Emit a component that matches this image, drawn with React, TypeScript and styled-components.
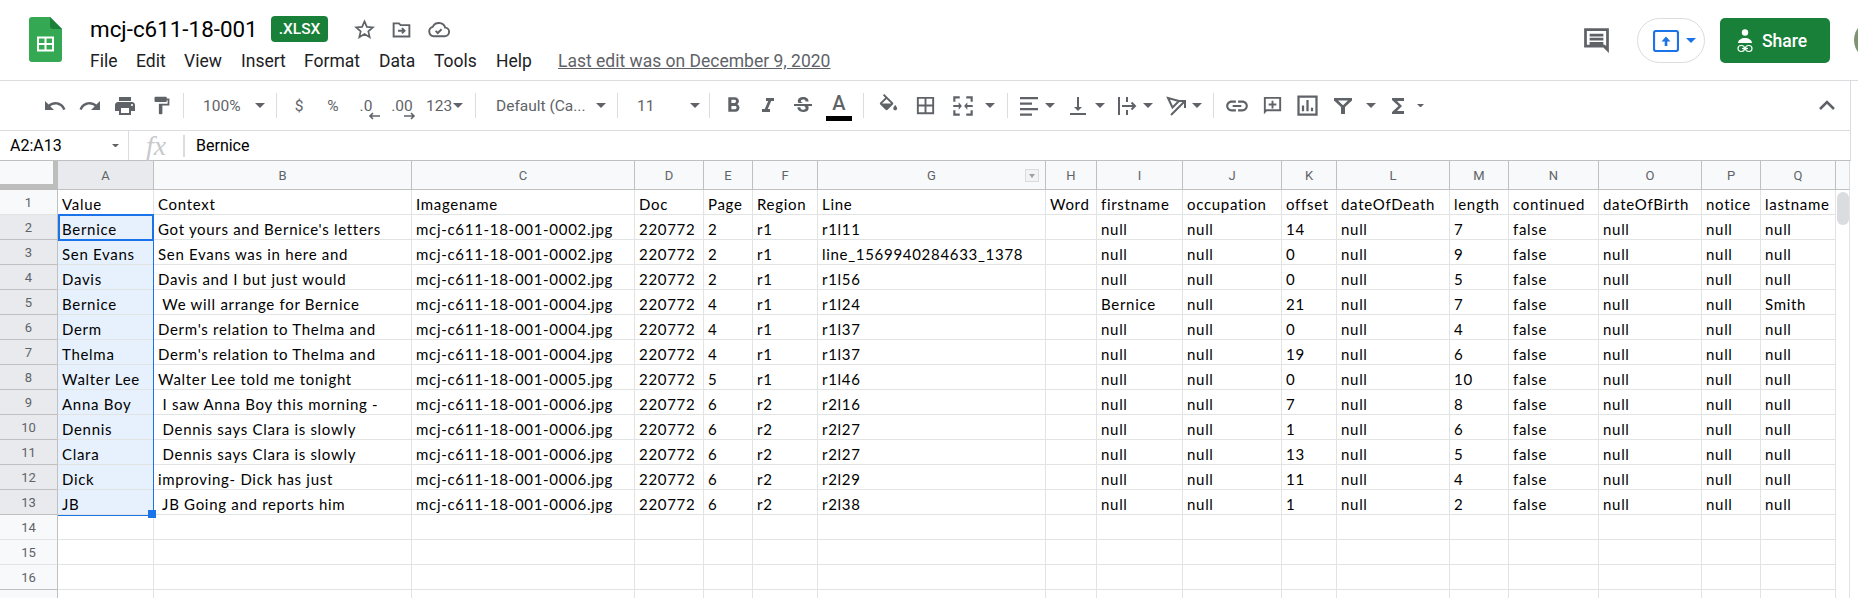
import React from 'react';
import styled, { createGlobalStyle } from 'styled-components';

const GlobalStyle = createGlobalStyle`
	html, body {
		margin: 0;
		padding: 0;
		background: #fff;
		overflow: hidden;
	}
	body {
		font-family: Roboto, "Liberation Sans", sans-serif;
		color: #202124;
	}
`;

const Page = styled.div`
	width: 1858px;
	height: 598px;
	overflow: hidden;
	display: flex;
	flex-direction: column;
`;

/* ---------- title bar ---------- */

const TitleBar = styled.header`
	height: 81px;
	flex: none;
	display: flex;
	box-sizing: border-box;
	border-bottom: 1px solid #dadce0;
`;

const LogoBox = styled.div`
	width: 90px;
	flex: none;
	padding: 17px 0 0 29px;
	box-sizing: border-box;
`;

const TitleBlock = styled.div`
	flex: 1;
	min-width: 0;
	display: flex;
	flex-direction: column;
`;

const TitleRow = styled.div`
	height: 26px;
	margin-top: 16px;
	display: flex;
	align-items: center;
`;

const DocName = styled.span`
	font-size: 22.4px;
	color: #000;
	width: 181px;
	flex: none;
`;

const Badge = styled.span`
	width: 57px;
	height: 26px;
	background: #188038;
	color: #fff;
	border-radius: 4px;
	font-size: 15.5px;
	font-weight: 500;
	display: flex;
	align-items: center;
	justify-content: center;
	margin-right: 18px;
`;

const TitleIcon = styled.span`
	width: 37px;
	display: flex;
	justify-content: center;
	color: #5f6368;
`;

const MenuRow = styled.nav`
	display: flex;
	align-items: center;
	margin-top: 9px;
	height: 20px;
	font-size: 17.5px;
	color: #202124;
	white-space: nowrap;
`;

const MenuItem = styled.span<{ $w: number }>`
	width: ${(p) => p.$w}px;
`;

const LastEdit = styled.span`
	color: #5f6368;
	text-decoration: underline;
`;

const HeaderRight = styled.div`
	display: flex;
	align-items: flex-start;
	padding-top: 18px;
	flex: none;
`;

const CommentBtn = styled.span`
	width: 41px;
	height: 45px;
	display: flex;
	align-items: center;
	justify-content: center;
	margin-right: 20px;
	color: #5f6368;
`;

const PresentPill = styled.span`
	width: 68px;
	height: 45px;
	box-sizing: border-box;
	border: 1px solid #dadce0;
	border-radius: 23px;
	display: flex;
	align-items: center;
	padding-left: 15px;
	gap: 7px;
	margin-right: 15px;
`;

const ShareBtn = styled.span`
	width: 110px;
	height: 45px;
	box-sizing: border-box;
	background: #188038;
	border-radius: 5px;
	color: #fff;
	font-size: 17.5px;
	font-weight: 500;
	display: flex;
	align-items: center;
	padding-left: 17px;
	gap: 9px;
`;

const Avatar = styled.span`
	width: 40px;
	height: 40px;
	margin: 2px -36px 0 24px;
	flex: none;
	border-radius: 50%;
	background: #7d9472;
`;

/* ---------- toolbar ---------- */

const ToolBar = styled.div`
	height: 50px;
	width: 1851px;
	flex: none;
	display: flex;
	align-items: center;
	box-sizing: border-box;
	border-bottom: 1px solid #dadce0;
	border-right: 1px solid #dadce0;
	padding-left: 37px;
	color: #5f6368;
`;

const Tool = styled.span<{ $w: number; $ml?: number }>`
	width: ${(p) => p.$w}px;
	margin-left: ${(p) => p.$ml ?? 0}px;
	height: 28px;
	flex: none;
	display: flex;
	align-items: center;
	justify-content: center;
	font-size: 15.5px;
	color: #5f6368;
	white-space: nowrap;
`;

const ToolLabel = styled.span<{ $w: number; $ml?: number }>`
	width: ${(p) => p.$w}px;
	margin-left: ${(p) => p.$ml ?? 0}px;
	height: 28px;
	flex: none;
	display: flex;
	align-items: center;
	font-size: 15.5px;
	color: #5f6368;
	white-space: nowrap;
`;

const Sep = styled.span<{ $ml?: number }>`
	width: 1px;
	height: 25px;
	flex: none;
	margin-left: ${(p) => p.$ml ?? 0}px;
	background: #dadce0;
`;

const Collapse = styled.span`
	margin-left: auto;
	margin-right: 11px;
	display: flex;
	color: #5f6368;
`;

const ColorBar = styled.span`
	position: absolute;
	left: 0;
	bottom: 0;
	width: 26px;
	height: 5px;
	background: #000;
`;

const TextColor = styled(Tool)`
	position: relative;
	height: 30px;
	font-size: 20px;
	font-weight: 500;
	align-items: flex-start;
	line-height: 24px;
`;

const DecimalTool = styled.span`
	position: relative;
	display: flex;
	justify-content: center;
	width: 100%;
	height: 28px;
	align-items: center;
`;

const ArrowMark = styled.svg`
	position: absolute;
	bottom: 0;
	margin-left: 16px;
`;

const CaretSvg = styled.svg`
	flex: none;
`;

/* ---------- formula bar ---------- */

const FormulaBar = styled.div`
	height: 30px;
	width: 1851px;
	flex: none;
	display: flex;
	align-items: center;
	box-sizing: border-box;
	border-bottom: 1px solid #c0c0c0;
	border-right: 1px solid #dadce0;
	font-size: 16px;
`;

const NameBox = styled.div`
	width: 129px;
	flex: none;
	height: 29px;
	box-sizing: border-box;
	border-right: 1px solid #dadce0;
	padding: 0 9px 0 10px;
	display: flex;
	align-items: center;
	justify-content: space-between;
	color: #000;
`;

const FxBox = styled.div`
	width: 54px;
	flex: none;
	display: flex;
	justify-content: center;
	font-family: "Liberation Serif", serif;
	font-style: italic;
	font-size: 28px;
	color: #c7c9cc;
	line-height: 29px;
`;

const FormulaSep = styled.span`
	width: 2px;
	height: 22px;
	background: #dadce0;
	flex: none;
`;

const FormulaValue = styled.span`
	margin-left: 11px;
	color: #000;
`;

/* ---------- grid ---------- */

const GridWrap = styled.div`
	flex: 1;
	position: relative;
	overflow: hidden;
`;

const Sheet = styled.div<{ $cols: string }>`
	display: grid;
	grid-template-columns: ${(p) => p.$cols};
	grid-template-rows: 29px repeat(17, 25px);
	width: 1850px;
`;

const Corner = styled.div`
	background: #f8f9fa;
	box-sizing: border-box;
	border-right: 5px solid #bdbdbd;
	border-bottom: 6px solid #bdbdbd;
`;

const ColHead = styled.div<{ $active?: boolean }>`
	background: ${(p) => (p.$active ? '#e8eaed' : '#f8f9fa')};
	box-sizing: border-box;
	border-right: 1px solid #c0c0c0;
	border-bottom: 1px solid #c0c0c0;
	display: flex;
	align-items: center;
	justify-content: center;
	font-size: 13px;
	color: #5f6368;
	position: relative;
`;

const FilterChip = styled.span`
	position: absolute;
	right: 6px;
	top: 8px;
	width: 14px;
	height: 13px;
	box-sizing: border-box;
	border: 1px solid #dadce0;
	background: #f1f3f4;
	display: flex;
	align-items: center;
	justify-content: center;
	&::after {
		content: '';
		border-left: 3px solid transparent;
		border-right: 3px solid transparent;
		border-top: 4px solid #9aa0a6;
	}
`;

const ScrollHead = styled.div`
	background: #f8f9fa;
	box-sizing: border-box;
	border-bottom: 1px solid #c0c0c0;
	border-right: 1px solid #dadce0;
`;

const RowHead = styled.div<{ $active?: boolean; $dark?: boolean }>`
	background: ${(p) => (p.$active ? '#e8eaed' : '#f8f9fa')};
	box-sizing: border-box;
	border-right: 1px solid #c0c0c0;
	border-bottom: 1px solid ${(p) => (p.$active || p.$dark ? '#c0c0c0' : '#e2e3e3')};
	display: flex;
	align-items: center;
	justify-content: center;
	font-size: 13px;
	color: #5f6368;
`;

const Cell = styled.div<{ $selected?: boolean }>`
	background: ${(p) => (p.$selected ? '#e7f0fd' : '#fff')};
	box-sizing: border-box;
	border-right: 1px solid #e2e3e3;
	border-bottom: 1px solid #e2e3e3;
	font-family: Lato, "Open Sans", sans-serif;
	font-size: 15px;
	letter-spacing: 0.7px;
	color: #000;
	padding: 4px 0 0 4px;
	display: flex;
	align-items: center;
	white-space: pre;
	overflow: hidden;
`;

const ScrollCell = styled.div`
	border-right: 1px solid #e2e3e3;
	box-sizing: border-box;
	background: #fff;
`;

const RangeOutline = styled.div`
	position: absolute;
	left: 58px;
	top: 53px;
	width: 96px;
	height: 302px;
	box-sizing: border-box;
	border-right: 1px solid #1a73e8;
	border-bottom: 1px solid #1a73e8;
	pointer-events: none;
`;

const ActiveOutline = styled.div`
	position: absolute;
	left: 58px;
	top: 53px;
	width: 96px;
	height: 27px;
	box-sizing: border-box;
	border: 2px solid #1a73e8;
	pointer-events: none;
`;

const FillHandle = styled.div`
	position: absolute;
	left: 148px;
	top: 349px;
	width: 8px;
	height: 8px;
	background: #1a73e8;
`;

const ScrollThumb = styled.div`
	position: absolute;
	left: 1837px;
	top: 31px;
	width: 12px;
	height: 33px;
	border-radius: 6px;
	background: #dadce0;
`;

/* ---------- icons ---------- */

const Caret: React.FC<{ color?: string; size?: number }> = ({ color = '#5f6368', size = 10 }) => (
	<CaretSvg width={size} height={size / 2} viewBox="0 0 10 5">
		<path d="M0 0h10L5 5z" fill={color} />
	</CaretSvg>
);

const Ico: React.FC<{ s?: number; d: string; stroke?: boolean; sw?: number }> = ({ s = 24, d, stroke, sw = 2 }) => (
	<svg
		width={s}
		height={s}
		viewBox="0 0 24 24"
		fill={stroke ? 'none' : 'currentColor'}
		stroke={stroke ? 'currentColor' : 'none'}
		strokeWidth={sw}
	>
		<path d={d} />
	</svg>
);

const SheetsLogo = () => (
	<svg width="33" height="45" viewBox="0 0 33 45">
		<path d="M21 0H3a3 3 0 0 0-3 3v39a3 3 0 0 0 3 3h27a3 3 0 0 0 3-3V12z" fill="#34a853" />
		<path d="M21 0v9a3 3 0 0 0 3 3h9z" fill="#188038" />
		<path
			d="M8 19.500h17v15H8zm2 2v4.500h5.500v-4.500zm7.500 0v4.500H23v-4.500zM10 28v4.500h5.500V28zm7.500 0v4.500H23V28z"
			fill="#fff"
			fillRule="evenodd"
		/>
	</svg>
);

const D = {
	star: 'M12 3.500l2.500 5.700 6.200.6-4.700 4.100 1.400 6.100-5.400-3.200-5.400 3.200 1.400-6.100-4.700-4.100 6.200-.6z',
	undo: 'M12.500 8c-2.650 0-5.050 1-6.900 2.600L2 7v9h9l-3.620-3.620c1.390-1.160 3.160-1.880 5.120-1.880 3.540 0 6.550 2.310 7.600 5.500l2.370-.78C21.080 11.030 17.150 8 12.500 8z',
	redo: 'M18.400 10.600C16.550 9 14.150 8 11.500 8c-4.650 0-8.580 3.030-9.960 7.220L3.900 16c1.050-3.190 4.050-5.500 7.600-5.500 1.950 0 3.730.72 5.120 1.880L13 16h9V7z',
	print: 'M19 8H5c-1.660 0-3 1.340-3 3v6h4v4h12v-4h4v-6c0-1.660-1.340-3-3-3zm-3 11H8v-5h8zm3-7c-.55 0-1-.45-1-1s.45-1 1-1 1 .45 1 1-.45 1-1 1zm-1-9H6v4h12z',
	paint: 'M18 4V3c0-.55-.45-1-1-1H5c-.55 0-1 .45-1 1v4c0 .55.45 1 1 1h12c.55 0 1-.45 1-1V6h1v4H9v11c0 .55.45 1 1 1h2c.55 0 1-.45 1-1v-9h8V4z',
	bold: 'M15.600 10.790c.97-.67 1.650-1.770 1.650-2.790 0-2.260-1.750-4-4-4H7v14h7.040c2.090 0 3.710-1.700 3.710-3.790 0-1.520-.86-2.820-2.150-3.420zM10 6.500h3c.83 0 1.500.67 1.500 1.500s-.67 1.500-1.500 1.500h-3zm3.500 9H10v-3h3.500c.83 0 1.500.67 1.500 1.500s-.67 1.500-1.500 1.500z',
	italic: 'M10 4v3h2.210l-3.420 8H6v3h8v-3h-2.210l3.420-8H18V4z',
	strike: 'M6.850 7.080C6.850 4.370 9.450 3 12.240 3c1.640 0 3 .49 3.900 1.280.77.65 1.460 1.730 1.460 3.240h-3.010c0-.31-.05-.59-.15-.85-.29-.86-1.200-1.280-2.250-1.280-1.860 0-2.340 1.020-2.340 1.700 0 .48.25.88.74 1.210.38.25.77.48 1.410.7H7.390c-.21-.34-.54-.89-.54-1.920zM21 12v-2H3v2h9.620c1.150.45 1.960.75 1.960 1.970 0 1-.81 1.670-2.280 1.670-1.540 0-2.930-.54-2.930-2.510H6.400c0 .55.08 1.130.24 1.580.81 2.290 3.290 3.300 5.670 3.300 2.270 0 5.300-.89 5.300-4.050 0-.3-.01-1.160-.48-1.960H21z',
	fill: 'M16.560 8.940L7.620 0 6.210 1.410l2.380 2.380-5.150 5.150c-.59.59-.59 1.540 0 2.120l5.500 5.500c.29.29.68.44 1.060.44s.77-.15 1.060-.44l5.500-5.500c.59-.58.59-1.530 0-2.120zM5.210 10L10 5.210 14.790 10zM19 11.500s-2 2.170-2 3.500c0 1.100.9 2 2 2s2-.9 2-2c0-1.330-2-3.500-2-3.500z',
	borders: 'M3 3v18h18V3zm8 16H5v-6h6zm0-8H5V5h6zm8 8h-6v-6h6zm0-8h-6V5h6z',
	merge: 'M3 3h6v2H5v3H3zm12 0h6v5h-2V5h-4zM3 16h2v3h4v2H3zm16 0h2v5h-6v-2h4zM3 11h5V8.500l3 3.500-3 3.500V13H3zm18 0h-5V8.500L13 12l3 3.500V13h5z',
	align: 'M3 3h18v2.200H3zm0 5.500h12v2.200H3zm0 5.500h18v2.200H3zm0 5.500h12v2.200H3z',
	valign: 'M11 3h2v10h3l-4 4-4-4h3zM4 19h16v2H4z',
	wrap: 'M4 3v18M12 3v5M12 16v5M7 12h13M16.500 8.500L20 12l-3.500 3.500',
	rotate: 'M4 4l11 3-6.500 6.500zM7 21L20 8M14 7h7v7',
	link: 'M3.900 12c0-1.710 1.390-3.100 3.100-3.100h4V7H7c-2.760 0-5 2.240-5 5s2.240 5 5 5h4v-1.900H7c-1.710 0-3.100-1.390-3.100-3.100zM8 13h8v-2H8zm9-6h-4v1.900h4c1.710 0 3.100 1.390 3.100 3.100s-1.390 3.100-3.100 3.100h-4V17h4c2.760 0 5-2.240 5-5s-2.240-5-5-5z',
	addComment: 'M3 3h18v15H6l-3 3zm2 2v11.200L5.200 16H19V5zm6 2h2v3h3v2h-3v3h-2v-3H8v-2h3z',
	chart: 'M3 3h18v18H3zm2 2v14h14V5zm2 7h2v5H7zm4-5h2v10h-2zm4 7h2v3h-2z',
	filter: 'M3 4h18v2.500l-7 6.500v7h-4v-7L3 6.500zm4 2.500l5 4.700 5-4.700z',
	sigma: 'M18 4H6v2l6.500 6L6 18v2h12v-3h-7l5-5-5-5h7z',
	comment: 'M3 3h18v18l-4-4H3zm2 2v10h13l1 1V5zm2 2h10v2H7zm0 3h10v2H7zm0 3h10v2H7z',
	chevronUp: 'M5 15l7-7 7 7',
};

/* ---------- data ---------- */

const WIDTHS = [58, 96, 258, 223, 69, 49, 65, 228, 51, 86, 99, 55, 113, 59, 90, 103, 59, 75, 14];
const LETTERS = 'ABCDEFGHIJKLMNOPQ'.split('');
const HEAD = ['Value', 'Context', 'Imagename', 'Doc', 'Page', 'Region', 'Line', 'Word', 'firstname', 'occupation', 'offset', 'dateOfDeath', 'length', 'continued', 'dateOfBirth', 'notice', 'lastname'];

// value, context, image no, page, region, line, firstname, offset, length, lastname
const ROWS: string[][] = [
	['Bernice', "Got yours and Bernice's letters", '0002', '2', 'r1', 'r1l11', 'null', '14', '7', 'null'],
	['Sen Evans', 'Sen Evans was in here and', '0002', '2', 'r1', 'line_1569940284633_1378', 'null', '0', '9', 'null'],
	['Davis', 'Davis and I but just would', '0002', '2', 'r1', 'r1l56', 'null', '0', '5', 'null'],
	['Bernice', ' We will arrange for Bernice', '0004', '4', 'r1', 'r1l24', 'Bernice', '21', '7', 'Smith'],
	['Derm', "Derm's relation to Thelma and", '0004', '4', 'r1', 'r1l37', 'null', '0', '4', 'null'],
	['Thelma', "Derm's relation to Thelma and", '0004', '4', 'r1', 'r1l37', 'null', '19', '6', 'null'],
	['Walter Lee', 'Walter Lee told me tonight', '0005', '5', 'r1', 'r1l46', 'null', '0', '10', 'null'],
	['Anna Boy', ' I saw Anna Boy this morning -', '0006', '6', 'r2', 'r2l16', 'null', '7', '8', 'null'],
	['Dennis', ' Dennis says Clara is slowly', '0006', '6', 'r2', 'r2l27', 'null', '1', '6', 'null'],
	['Clara', ' Dennis says Clara is slowly', '0006', '6', 'r2', 'r2l27', 'null', '13', '5', 'null'],
	['Dick', 'improving- Dick has just', '0006', '6', 'r2', 'r2l29', 'null', '11', '4', 'null'],
	['JB', ' JB Going and reports him', '0006', '6', 'r2', 'r2l38', 'null', '1', '2', 'null'],
];

const rowCells = (r: string[]): string[] => [
	r[0], r[1], `mcj-c611-18-001-${r[2]}.jpg`, '220772', r[3], r[4], r[5], '', r[6],
	'null', r[7], 'null', r[8], 'false', 'null', 'null', r[9],
];

const App: React.FC = () => {
	return (
		<Page>
			<GlobalStyle />
			<TitleBar>
				<LogoBox>
					<SheetsLogo />
				</LogoBox>
				<TitleBlock>
					<TitleRow>
						<DocName>mcj-c611-18-001</DocName>
						<Badge>.XLSX</Badge>
						<TitleIcon>
							<Ico s={23} d={D.star} stroke sw={1.8} />
						</TitleIcon>
						<TitleIcon>
							<svg width="21" height="21" viewBox="0 0 24 24" fill="none" stroke="currentColor" strokeWidth="2.200">
								<path d="M3 5h6l2 2h10v13H3z" />
								<path d="M8 13.500h7M12.500 10.500l3 3-3 3" />
							</svg>
						</TitleIcon>
						<TitleIcon>
							<svg width="23" height="23" viewBox="0 0 24 24" fill="none" stroke="currentColor" strokeWidth="2">
								<path d="M7 19a5 5 0 0 1-1-9.800A7 7 0 0 1 19 10a4.500 4.500 0 0 1-1 9z" />
								<path d="M9 13.500l2.200 2.200 4-4" />
							</svg>
						</TitleIcon>
					</TitleRow>
					<MenuRow>
						<MenuItem $w={46}>File</MenuItem>
						<MenuItem $w={48}>Edit</MenuItem>
						<MenuItem $w={57}>View</MenuItem>
						<MenuItem $w={63}>Insert</MenuItem>
						<MenuItem $w={75}>Format</MenuItem>
						<MenuItem $w={55}>Data</MenuItem>
						<MenuItem $w={62}>Tools</MenuItem>
						<MenuItem $w={62}>Help</MenuItem>
						<LastEdit>Last edit was on December 9, 2020</LastEdit>
					</MenuRow>
				</TitleBlock>
				<HeaderRight>
					<CommentBtn>
						<Ico s={33} d={D.comment} />
					</CommentBtn>
					<PresentPill>
						<svg width="26" height="22" viewBox="0 0 26 22" fill="none">
							<rect x="1" y="1" width="24" height="20" rx="2" stroke="#1a73e8" strokeWidth="2.200" />
							<path d="M13 10v6" stroke="#1a73e8" strokeWidth="2.600" />
							<path d="M8.500 11.500L13 6.500l4.500 5z" fill="#1a73e8" />
						</svg>
						<Caret color="#1a73e8" />
					</PresentPill>
					<ShareBtn>
						<svg width="16" height="24" viewBox="0 0 16 24" fill="#fff">
							<circle cx="8" cy="3.500" r="3.200" />
							<path d="M1 14c0-3 3.500-5 7-5s7 2 7 5z" />
							<rect x="1" y="16.500" width="6.500" height="6" rx="3" fill="none" stroke="#fff" strokeWidth="1.200" />
							<rect x="8.500" y="16.500" width="6.500" height="6" rx="3" fill="none" stroke="#fff" strokeWidth="1.200" />
							<path d="M5 19.500h6" stroke="#fff" strokeWidth="1.200" />
						</svg>
						Share
					</ShareBtn>
					<Avatar />
				</HeaderRight>
			</TitleBar>

			<ToolBar>
				<Tool $w={36}><Ico d={D.undo} /></Tool>
				<Tool $w={34}><Ico d={D.redo} /></Tool>
				<Tool $w={36}><Ico d={D.print} /></Tool>
				<Tool $w={36}><Ico d={D.paint} s={21} /></Tool>
				<Sep $ml={4} />
				<ToolLabel $w={47} $ml={19}>100%</ToolLabel>
				<Tool $w={20}><Caret /></Tool>
				<Sep $ml={6} />
				<Tool $w={44}>$</Tool>
				<Tool $w={24}>%</Tool>
				<Tool $w={42}>
					<DecimalTool>
						.0
						<ArrowMark width="12" height="8" viewBox="0 0 12 8">
							<path d="M12 4H3M5 1L2 4l3 3" stroke="#5f6368" strokeWidth="1.600" fill="none" />
						</ArrowMark>
					</DecimalTool>
				</Tool>
				<Tool $w={30}>
					<DecimalTool>
						.00
						<ArrowMark width="12" height="8" viewBox="0 0 12 8">
							<path d="M0 4h9M7 1l3 3-3 3" stroke="#5f6368" strokeWidth="1.600" fill="none" />
						</ArrowMark>
					</DecimalTool>
				</Tool>
				<ToolLabel $w={24} $ml={9}>123</ToolLabel>
				<Tool $w={16}><Caret /></Tool>
				<Sep $ml={9} />
				<ToolLabel $w={94} $ml={20}>Default (Ca...</ToolLabel>
				<Tool $w={22}><Caret /></Tool>
				<Sep $ml={5} />
				<ToolLabel $w={48} $ml={19}>11</ToolLabel>
				<Tool $w={20}><Caret /></Tool>
				<Sep $ml={4} />
				<Tool $w={46}><Ico d={D.bold} s={25} /></Tool>
				<Tool $w={24}><Ico d={D.italic} s={24} /></Tool>
				<Tool $w={46}><Ico d={D.strike} s={24} /></Tool>
				<TextColor $w={26}>A<ColorBar /></TextColor>
				<Sep $ml={11} />
				<Tool $w={48}><Ico d={D.fill} s={23} /></Tool>
				<Tool $w={26}><Ico d={D.borders} s={23} /></Tool>
				<Tool $w={50}><Ico d={D.merge} s={26} /></Tool>
				<Tool $w={4}><Caret /></Tool>
				<Sep $ml={15} />
				<Tool $w={26} $ml={8}><Ico d={D.align} /></Tool>
				<Tool $w={16}><Caret /></Tool>
				<Tool $w={40}><Ico d={D.valign} /></Tool>
				<Tool $w={4}><Caret /></Tool>
				<Tool $w={30} $ml={10}><Ico d={D.wrap} stroke /></Tool>
				<Tool $w={12}><Caret /></Tool>
				<Tool $w={30} $ml={7}><Ico d={D.rotate} stroke /></Tool>
				<Tool $w={12}><Caret /></Tool>
				<Sep $ml={10} />
				<Tool $w={46}><Ico d={D.link} s={26} /></Tool>
				<Tool $w={24}><Ico d={D.addComment} s={23} /></Tool>
				<Tool $w={46}><Ico d={D.chart} s={27} /></Tool>
				<Tool $w={26}><Ico d={D.filter} /></Tool>
				<Tool $w={30}><Caret /></Tool>
				<Tool $w={24}><Ico d={D.sigma} s={26} /></Tool>
				<Tool $w={20}><Caret size={7} /></Tool>
				<Collapse>
					<Ico d={D.chevronUp} stroke sw={2.600} />
				</Collapse>
			</ToolBar>

			<FormulaBar>
				<NameBox>
					A2:A13
					<Caret size={7} />
				</NameBox>
				<FxBox>fx</FxBox>
				<FormulaSep />
				<FormulaValue>Bernice</FormulaValue>
			</FormulaBar>

			<GridWrap>
				<Sheet $cols={WIDTHS.map((w) => `${w}px`).join(' ')}>
					<Corner />
					{LETTERS.map((l, i) => (
						<ColHead key={l} $active={i === 0}>
							{l}
							{l === 'G' && <FilterChip />}
						</ColHead>
					))}
					<ScrollHead />

					<RowHead>1</RowHead>
					{HEAD.map((h) => (
						<Cell key={h}>{h}</Cell>
					))}
					<ScrollCell />

					{ROWS.map((row, i) => (
						<React.Fragment key={i}>
							<RowHead $active>{i + 2}</RowHead>
							{rowCells(row).map((text, c) => (
								<Cell key={c} $selected={c === 0}>{text}</Cell>
							))}
							<ScrollCell />
						</React.Fragment>
					))}

					{['14', '15', '16', ''].map((n) => (
						<React.Fragment key={n}>
							<RowHead $dark={n === '16'}>{n}</RowHead>
							{LETTERS.map((l) => (
								<Cell key={l} />
							))}
							<ScrollCell />
						</React.Fragment>
					))}
				</Sheet>
				<RangeOutline />
				<ActiveOutline />
				<FillHandle />
				<ScrollThumb />
			</GridWrap>
		</Page>
	);
};

export default App;
